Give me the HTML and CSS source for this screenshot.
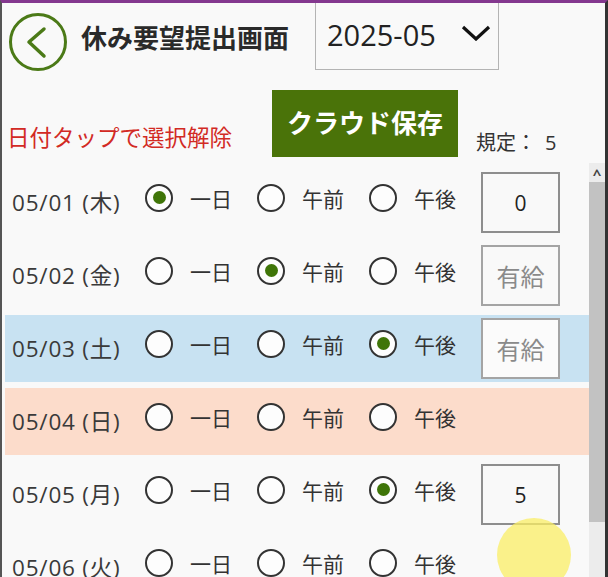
FILE: index.html
```html
<!DOCTYPE html>
<html lang="ja">
<head>
    <meta charset="UTF-8">
    <meta name="viewport" content="width=device-width, initial-scale=1.0">
    <title>休み要望提出画面</title>
    <link rel="stylesheet" href="styles.css">
</head>
<body>
    <div class="window">
        <header class="topbar">
            <button class="back" aria-label="戻る">
                <svg width="60" height="60" viewBox="0 0 60 60">
                    <circle cx="30" cy="30" r="27.5" fill="none" stroke="#4b7a17" stroke-width="3"/>
                    <polyline points="36,17 21,30 36,44" fill="none" stroke="#4b7a17" stroke-width="3.5" stroke-linecap="round" stroke-linejoin="round"/>
                </svg>
            </button>
            <h1 class="title">休み要望提出画面</h1>
            <div class="month-select">
                <span>2025-05</span>
                <svg width="30" height="16" viewBox="0 0 30 16">
                    <polyline points="2,2 15,14 28,2" fill="none" stroke="#111" stroke-width="3.2"/>
                </svg>
            </div>
        </header>

        <div class="toolbar">
            <p class="hint">日付タップで選択解除</p>
            <button class="save">クラウド保存</button>
            <span class="quota">規定：<span class="quota-num">5</span></span>
        </div>

        <div class="list-wrap">
            <div class="list">
                <div class="row">
                    <span class="date">05/01 (木)</span>
                    <label class="opt"><input type="radio" name="d1" checked><span>一日</span></label>
                    <label class="opt"><input type="radio" name="d1"><span>午前</span></label>
                    <label class="opt"><input type="radio" name="d1"><span>午後</span></label>
                    <div class="box">0</div>
                </div>
                <div class="row">
                    <span class="date">05/02 (金)</span>
                    <label class="opt"><input type="radio" name="d2"><span>一日</span></label>
                    <label class="opt"><input type="radio" name="d2" checked><span>午前</span></label>
                    <label class="opt"><input type="radio" name="d2"><span>午後</span></label>
                    <div class="box paid">有給</div>
                </div>
                <div class="row sat">
                    <span class="date">05/03 (土)</span>
                    <label class="opt"><input type="radio" name="d3"><span>一日</span></label>
                    <label class="opt"><input type="radio" name="d3"><span>午前</span></label>
                    <label class="opt"><input type="radio" name="d3" checked><span>午後</span></label>
                    <div class="box paid">有給</div>
                </div>
                <div class="row sun">
                    <span class="date">05/04 (日)</span>
                    <label class="opt"><input type="radio" name="d4"><span>一日</span></label>
                    <label class="opt"><input type="radio" name="d4"><span>午前</span></label>
                    <label class="opt"><input type="radio" name="d4"><span>午後</span></label>
                </div>
                <div class="row">
                    <span class="date">05/05 (月)</span>
                    <label class="opt"><input type="radio" name="d5"><span>一日</span></label>
                    <label class="opt"><input type="radio" name="d5"><span>午前</span></label>
                    <label class="opt"><input type="radio" name="d5" checked><span>午後</span></label>
                    <div class="box">5</div>
                </div>
                <div class="row">
                    <span class="date">05/06 (火)</span>
                    <label class="opt"><input type="radio" name="d6"><span>一日</span></label>
                    <label class="opt"><input type="radio" name="d6"><span>午前</span></label>
                    <label class="opt"><input type="radio" name="d6"><span>午後</span></label>
                </div>
            </div>

            <div class="scrollbar">
                <span class="arrow">^</span>
                <div class="thumb"></div>
            </div>
        </div>

        <div class="touch"></div>
    </div>
</body>
</html>
```

FILE: styles.css
```css
body {
    margin: 0;
    font-family: "Open Sans", "Noto Sans CJK JP", sans-serif;
    color: #333;
    background-color: #f9f9f9;
}

.window {
    position: relative;
    width: 608px;
    height: 577px;
    box-sizing: border-box;
    border-top: 3px solid #84388f;
    border-left: 2px solid #555;
    border-right: 3px solid #333;
    background-color: #f9f9f9;
    display: flex;
    flex-direction: column;
    overflow: hidden;
}

/* header */
.topbar {
    display: flex;
    align-items: center;
    height: 77px;
    padding-left: 6px;
    flex-shrink: 0;
}

.back {
    width: 60px;
    height: 60px;
    padding: 0;
    border: none;
    background: none;
    display: flex;
}

.title {
    margin: 0 0 10px 13px;
    font-family: "Noto Sans CJK JP", sans-serif;
    font-size: 26px;
    font-weight: bold;
    color: #2a2a2a;
    line-height: 1.2;
}

.month-select {
    align-self: flex-start;
    margin-left: 26px;
    width: 184px;
    height: 67px;
    box-sizing: border-box;
    border: 1px solid #b4b4b4;
    border-top: none;
    display: flex;
    align-items: center;
    justify-content: space-between;
    padding: 0 7px 4px 11px;
    font-size: 29px;
    color: #222;
}

.month-select svg {
    margin-top: -2px;
}

/* toolbar */
.toolbar {
    display: flex;
    height: 83px;
    padding: 10px 0 0 5px;
    box-sizing: border-box;
    flex-shrink: 0;
}

.hint {
    align-self: flex-end;
    margin: 0 0 12px 0;
    font-family: "Noto Sans CJK JP", sans-serif;
    font-size: 22.5px;
    line-height: 1.3;
    color: #d22a24;
}

.save {
    margin-left: 40px;
    width: 186px;
    height: 67px;
    border: none;
    background-color: #4a7309;
    color: #fff;
    font-family: "Noto Sans CJK JP", sans-serif;
    font-size: 26px;
    font-weight: bold;
    padding: 0 0 4px 0;
}

.quota {
    align-self: flex-end;
    margin: 0 0 7px 18px;
    font-size: 20px;
    line-height: 26px;
    color: #333;
}

.quota-num {
    margin-left: 9px;
}

/* list */
.list-wrap {
    flex: 1;
    display: flex;
    min-height: 0;
}

.list {
    flex: 1;
    padding: 6px 0 0 3px;
    display: flex;
    flex-direction: column;
    gap: 6px;
}

.row {
    display: flex;
    align-items: center;
    height: 67px;
    flex-shrink: 0;
    padding-left: 7px;
}

.row.sat {
    background-color: #c8e2f2;
}

.row.sun {
    background-color: #fcdccb;
}

.date {
    width: 133px;
    padding-bottom: 3px;
    font-size: 22.5px;
    letter-spacing: 0.8px;
    color: #3a3a3a;
}

.opt {
    display: flex;
    align-items: center;
    gap: 17px;
    width: 112px;
    margin-bottom: 10px;
    font-family: "Noto Sans CJK JP", sans-serif;
    font-size: 21px;
    color: #333;
}

.opt input {
    appearance: none;
    margin: 0;
    width: 28px;
    height: 28px;
    border: 2px solid #333;
    border-radius: 50%;
    background-color: #fdfdfd;
    display: flex;
    align-items: center;
    justify-content: center;
    flex-shrink: 0;
}

.opt input:checked::after {
    content: "";
    width: 13px;
    height: 13px;
    border-radius: 50%;
    background-color: #3f7508;
}

.box {
    width: 79px;
    height: 61px;
    box-sizing: border-box;
    border: 2px solid #8e8e8e;
    display: flex;
    align-items: center;
    justify-content: center;
    font-size: 21px;
    color: #222;
}

.box.paid {
    border-color: #a4a4a4;
    color: #8a8a8a;
    font-family: "Noto Sans CJK JP", sans-serif;
    font-size: 24px;
}

.row.sat .box {
    background-color: #fbfbfb;
}

/* scrollbar */
.scrollbar {
    width: 16px;
    background-color: #ececec;
    display: flex;
    flex-direction: column;
    align-items: center;
}

.arrow {
    height: 19px;
    font-size: 15px;
    line-height: 22px;
    color: #444;
    font-weight: bold;
}

.thumb {
    width: 100%;
    height: 340px;
    background-color: #c2c2c2;
}

/* touch indicator */
.touch {
    position: absolute;
    left: 495px;
    top: 515px;
    width: 74px;
    height: 74px;
    border-radius: 50%;
    background-color: rgba(250, 238, 100, 0.75);
}
```
